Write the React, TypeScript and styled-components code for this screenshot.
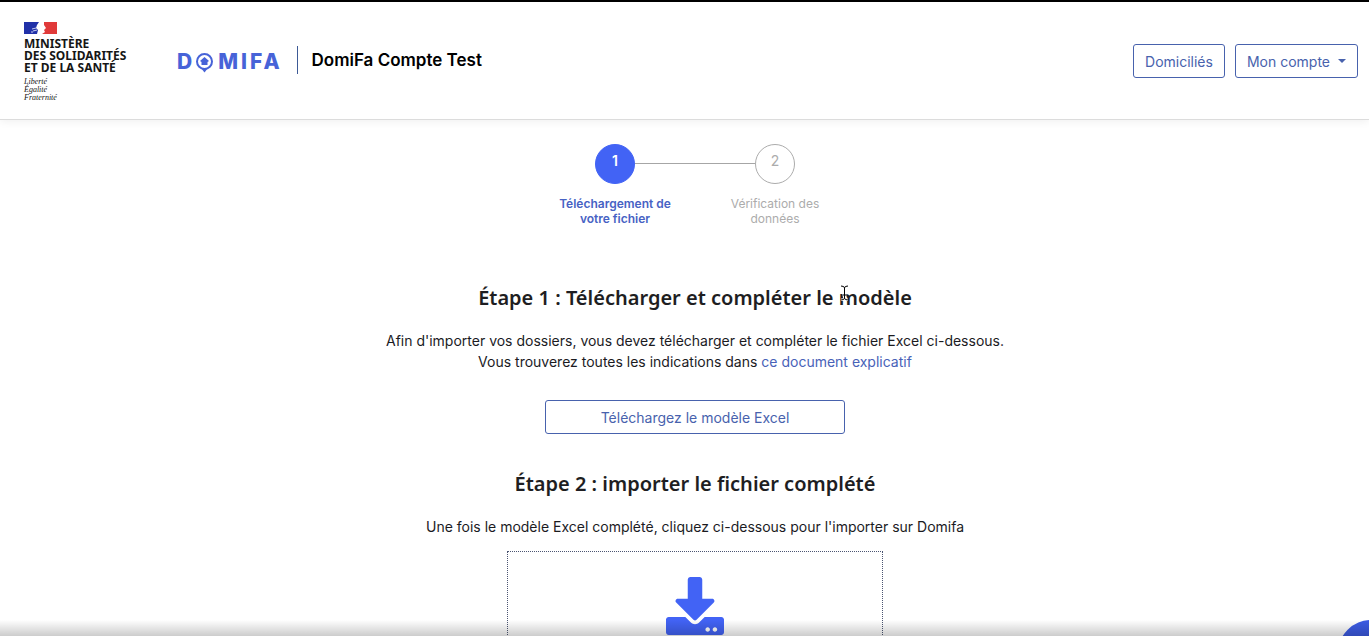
import React from "react";
import styled, { createGlobalStyle } from "styled-components";
import { FaDownload } from "react-icons/fa";

const GlobalStyle = createGlobalStyle`
  *, *::before, *::after { box-sizing: border-box; }
  body {
    margin: 0;
    background: #fff;
    color: #1b1b1f;
    font-family: Inter, "Liberation Sans", sans-serif;
    font-size: 14px;
    line-height: 21px;
  }
`;

const Page = styled.div`
  position: relative;
  height: 100vh;
  overflow: hidden;
  border-top: 2px solid #000;
`;

const Header = styled.header`
  display: flex;
  align-items: center;
  justify-content: space-between;
  height: 118px;
  padding: 0 11px 0 24px;
  border-bottom: 1px solid #dcdcdc;
  box-shadow: 0 2px 8px rgba(0, 0, 0, 0.06);
`;

const Brand = styled.div`
  display: flex;
  align-items: center;
`;

const Ministry = styled.a`
  display: block;
  width: 153px;
  padding-top: 2px;
  color: #161616;
  text-decoration: none;
`;

const Flag = styled.svg`
  display: block;
  width: 33px;
  height: 12px;
  margin-bottom: 4px;
`;

const MinistryName = styled.span`
  display: block;
  font-family: "Noto Sans", sans-serif;
  font-size: 12px;
  font-weight: 700;
  line-height: 12px;
  white-space: nowrap;
`;

const Motto = styled.span`
  display: block;
  margin-top: 4px;
  font-family: "Liberation Serif", serif;
  font-size: 8px;
  font-style: italic;
  line-height: 8px;
`;

const DomifaLink = styled.a`
  display: flex;
  align-items: center;
  height: 28px;
  margin-bottom: 2px;
  padding: 4px 14px 0 0;
  border-right: 1px solid #3d5a96;
  color: #4763d8;
  text-decoration: none;
`;

const LogoLetters = styled.span`
  font-family: Inter, sans-serif;
  font-size: 21px;
  font-weight: 800;
  line-height: 28px;
  letter-spacing: 3px;
`;

const Pin = styled.svg`
  width: 19px;
  height: 22px;
  margin-right: 4px;
`;

const Structure = styled.strong`
  padding: 0 0 2px 14px;
  color: #000;
  font-size: 17px;
  font-weight: 600;
  line-height: 24px;
`;

const Nav = styled.nav`
  display: flex;
  gap: 10px;
`;

const OutlineButton = styled.button<{ $wide?: boolean }>`
  display: inline-flex;
  align-items: center;
  justify-content: center;
  gap: 8px;
  width: ${(p) => (p.$wide ? "300px" : "auto")};
  height: 34px;
  padding: 1px 11px 0;
  border: 1px solid #4862ad;
  border-radius: 3px;
  background: #fff;
  color: #4862ad;
  font: inherit;
  white-space: nowrap;
`;

const Caret = styled.span`
  border: 4px solid transparent;
  border-top-color: currentColor;
  border-bottom: 0;
`;

const Main = styled.main`
  display: flex;
  flex-direction: column;
  align-items: center;
  padding: 24px 0 0 21px;
  text-align: center;
`;

const Steps = styled.ol`
  display: flex;
  margin: 0 0 60px;
  padding: 0;
  list-style: none;
`;

const Step = styled.li<{ $active?: boolean }>`
  display: flex;
  flex-direction: column;
  align-items: center;
  gap: 12px;
  width: 160px;
  color: ${(p) => (p.$active ? "#4762c4" : "#acacac")};
  font-size: 12px;
  font-weight: ${(p) => (p.$active ? 600 : 400)};
  line-height: 15px;
`;

const StepTrack = styled.div`
  display: grid;
  grid-template-columns: 1fr 40px 1fr;
  align-items: center;
  width: 100%;
`;

const Line = styled.span<{ $shown?: boolean }>`
  height: 1px;
  margin-bottom: 2px;
  background: ${(p) => (p.$shown ? "#a6a6a6" : "transparent")};
`;

const Circle = styled.span<{ $active?: boolean }>`
  height: 40px;
  border: 1px solid ${(p) => (p.$active ? "#4263f5" : "#acacac")};
  border-radius: 50%;
  background: ${(p) => (p.$active ? "#4263f5" : "#fff")};
  color: ${(p) => (p.$active ? "#fff" : "#acacac")};
  font-size: 14px;
  line-height: 32px;
`;

const StepLabel = styled.span`
  width: 120px;
`;

const Title = styled.h2`
  margin: 0;
  color: #1e1e22;
  font-family: "Noto Sans", sans-serif;
  font-size: 20px;
  font-weight: 600;
  line-height: 24px;
`;

const Text = styled.p<{ $gap: number }>`
  margin: 20px 0 ${(p) => p.$gap}px;
`;

const Link = styled.a`
  color: #4862b8;
  text-decoration: none;
`;

const SecondTitle = styled(Title)`
  margin-top: 38px;
`;

const DropZone = styled.label`
  display: flex;
  justify-content: center;
  width: 376px;
  height: 150px;
  padding-top: 25px;
  border: 1px dotted #4b5572;
  color: #4263f5;
`;

const HiddenFile = styled.input`
  position: absolute;
  width: 1px;
  height: 1px;
  opacity: 0;
`;

const BottomShade = styled.div`
  position: absolute;
  right: 0;
  bottom: 0;
  left: 0;
  height: 16px;
  background: linear-gradient(rgba(0, 0, 0, 0), rgba(0, 0, 0, 0.2));
  pointer-events: none;
`;

const ChatButton = styled.button`
  position: absolute;
  right: -35px;
  bottom: -50px;
  width: 66px;
  height: 66px;
  border: 0;
  border-radius: 50%;
  background: #3c5be4;
`;

const Pointer = styled.svg`
  position: absolute;
  top: 283px;
  left: 839px;
  width: 11px;
  height: 16px;
`;

export default function App() {
  return (
    <>
      <GlobalStyle />
      <Page>
        <Header>
          <Brand>
            <Ministry href="#ministere">
              <Flag viewBox="0 0 33 12" aria-hidden="true">
                <path d="M0 0H15L13 3L12 6L14 8L13 12H0Z" fill="#2131a8" />
                <path d="M20 0H33V12H18L21 10L20 8L22 6L20 3Z" fill="#e03a3a" />
                <path d="M8 7L12 6M9 9L13 8M7 10H9" stroke="#c5cbf0" />
              </Flag>
              <MinistryName>
                MINISTÈRE
                <br />
                DES SOLIDARITÉS
                <br />
                ET DE LA SANTÉ
              </MinistryName>
              <Motto>
                Liberté
                <br />
                Égalité
                <br />
                Fraternité
              </Motto>
            </Ministry>
            <DomifaLink href="#accueil" aria-label="DOMIFA">
              <LogoLetters>D</LogoLetters>
              <Pin viewBox="0 0 19 22" aria-hidden="true">
                <path d="M6 17L9.500 21.500L13 17" fill="currentColor" />
                <circle cx="9.500" cy="10.500" r="7.500" fill="#fff" stroke="currentColor" strokeWidth="2" />
                <path d="M9.500 6L14 10L12.500 11V14H6.500V11L5 10Z" fill="currentColor" />
              </Pin>
              <LogoLetters>MIFA</LogoLetters>
            </DomifaLink>
            <Structure>DomiFa Compte Test</Structure>
          </Brand>
          <Nav>
            <OutlineButton type="button">Domiciliés</OutlineButton>
            <OutlineButton type="button" aria-haspopup="menu">
              Mon compte
              <Caret />
            </OutlineButton>
          </Nav>
        </Header>
        <Main>
          <Steps>
            <Step $active>
              <StepTrack>
                <Line />
                <Circle $active>1</Circle>
                <Line $shown />
              </StepTrack>
              <StepLabel>Téléchargement de votre fichier</StepLabel>
            </Step>
            <Step>
              <StepTrack>
                <Line $shown />
                <Circle>2</Circle>
                <Line />
              </StepTrack>
              <StepLabel>Vérification des données</StepLabel>
            </Step>
          </Steps>
          <Title>Étape 1 : Télécharger et compléter le modèle</Title>
          <Text $gap={28}>
            Afin d'importer vos dossiers, vous devez télécharger et compléter le fichier Excel ci-dessous.
            <br />
            Vous trouverez toutes les indications dans <Link href="#guide">ce document explicatif</Link>
          </Text>
          <OutlineButton type="button" $wide>
            Téléchargez le modèle Excel
          </OutlineButton>
          <SecondTitle>Étape 2 : importer le fichier complété</SecondTitle>
          <Text $gap={14}>Une fois le modèle Excel complété, cliquez ci-dessous pour l'importer sur Domifa</Text>
          <DropZone>
            <HiddenFile type="file" aria-label="Importer le fichier complété" />
            <FaDownload size={58} />
          </DropZone>
        </Main>
        <ChatButton type="button" aria-label="Aide" />
        <BottomShade />
        <Pointer viewBox="0 0 11 16" aria-hidden="true">
          <path
            d="M2 1Q5.500 1 5.500 3Q5.500 1 9 1M5.500 3V13M3.500 10H7.500M2 15Q5.500 15 5.500 13Q5.500 15 9 15"
            fill="none"
            stroke="#fff"
            strokeWidth="3"
          />
          <path
            d="M2 1Q5.500 1 5.500 3Q5.500 1 9 1M5.500 3V13M3.500 10H7.500M2 15Q5.500 15 5.500 13Q5.500 15 9 15"
            fill="none"
            stroke="#000"
          />
        </Pointer>
      </Page>
    </>
  );
}
